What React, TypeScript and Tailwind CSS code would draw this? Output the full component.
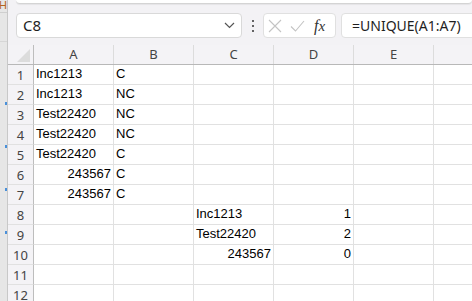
import React from 'react';

const cols = ['A', 'B', 'C', 'D', 'E', 'F'];
const widths = [80, 80, 80, 80, 80, 40];

type Cell = { v: string; right?: boolean };

// row data, keyed by column index
const rows: Record<number, Record<number, Cell>> = {
    1: { 0: { v: 'Inc1213' }, 1: { v: 'C' } },
    2: { 0: { v: 'Inc1213' }, 1: { v: 'NC' } },
    3: { 0: { v: 'Test22420' }, 1: { v: 'NC' } },
    4: { 0: { v: 'Test22420' }, 1: { v: 'NC' } },
    5: { 0: { v: 'Test22420' }, 1: { v: 'C' } },
    6: { 0: { v: '243567', right: true }, 1: { v: 'C' } },
    7: { 0: { v: '243567', right: true }, 1: { v: 'C' } },
    8: { 2: { v: 'Inc1213' }, 3: { v: '1', right: true } },
    9: { 2: { v: 'Test22420' }, 3: { v: '2', right: true } },
    10: { 2: { v: '243567', right: true }, 3: { v: '0', right: true } },
    11: {},
    12: {},
};

const cellFont = { fontFamily: '"Liberation Sans", Arial, sans-serif' };
const uiFont = { fontFamily: '"Noto Sans", "Open Sans", sans-serif' };

function FormulaBar() {
    return (
        <div className="h-[40px] flex items-start pt-[8px] pl-[8px] shrink-0">
            {/* name box */}
            <div className="w-[226px] h-[25px] bg-white border border-[#d9d9d9] rounded-[4px] flex items-center justify-between pl-[6px] pr-[6px] shrink-0">
                <span className="text-[15px] text-[#1f1f1f]" style={uiFont}>C8</span>
                <svg width="11" height="7" viewBox="0 0 11 7" fill="none">
                    <path d="M1 1l4.5 4.5L10 1" stroke="#555" strokeWidth="1.2" />
                </svg>
            </div>
            {/* kebab */}
            <div className="w-[21px] h-[25px] flex flex-col items-center justify-center gap-[3px] shrink-0">
                <span className="w-[2px] h-[2px] bg-[#333] rounded-full" />
                <span className="w-[2px] h-[2px] bg-[#333] rounded-full" />
                <span className="w-[2px] h-[2px] bg-[#333] rounded-full" />
            </div>
            {/* cancel / enter / fx */}
            <div className="w-[73px] h-[25px] bg-white border border-[#e0e0e0] rounded-[4px] flex items-center pl-[4px] gap-[8px] shrink-0">
                <svg width="14" height="14" viewBox="0 0 14 14" fill="none">
                    <path d="M1 1l12 12M13 1L1 13" stroke="#c4c4c4" strokeWidth="1.1" />
                </svg>
                <svg width="15" height="12" viewBox="0 0 15 12" fill="none">
                    <path d="M1 6.5l4.5 4.5L14 1" stroke="#c4c4c4" strokeWidth="1.1" />
                </svg>
                <span className="text-[16px] italic text-[#333] ml-[1px]" style={{ fontFamily: '"Liberation Serif", "DejaVu Serif", serif' }}>
                    f<span className="text-[15px]">x</span>
                </span>
            </div>
            {/* formula input */}
            <div className="ml-[5px] w-[160px] h-[25px] bg-white border border-[#e0e0e0] rounded-[4px] flex items-center pl-[10px] shrink-0">
                <span className="text-[14px] text-[#1f1f1f] whitespace-nowrap" style={uiFont}>=UNIQUE(A1:A7)</span>
            </div>
        </div>
    );
}

function Grid() {
    return (
        <div className="flex flex-col bg-white">
            {/* column header */}
            <div className="flex h-[20px] bg-[#f4f3f6] border-b border-[#b8b8b8]">
                <div className="w-[26px] shrink-0 border-r border-[#bdbdbd] relative">
                    <svg className="absolute right-[3px] bottom-[2px]" width="13" height="13" viewBox="0 0 13 13">
                        <path d="M13 0V13H0Z" fill="#dcdcdc" />
                    </svg>
                </div>
                {cols.map((c, i) => (
                    <div
                        key={c}
                        style={{ width: widths[i], ...uiFont }}
                        className="shrink-0 border-r border-[#dcdcdc] flex items-center justify-center text-[13px] text-[#444] pt-[1px]"
                    >
                        {c === 'F' ? '' : c}
                    </div>
                ))}
            </div>
            {Object.keys(rows).map((k) => {
                const r = Number(k);
                return (
                    <div key={r} className="flex h-[20px]">
                        <div
                            className="w-[26px] shrink-0 bg-[#f4f3f6] border-r border-[#bdbdbd] border-b border-b-[#e1e1e1] flex items-center justify-center text-[13px] text-[#444] pt-[2px]"
                            style={uiFont}
                        >
                            {r}
                        </div>
                        {cols.map((c, i) => {
                            const cell = rows[r][i];
                            return (
                                <div
                                    key={c}
                                    style={{ width: widths[i], ...cellFont }}
                                    className={`shrink-0 border-r border-b border-[#e1e1e1] flex items-end pb-[1px] px-[2px] text-[13px] text-black whitespace-nowrap ${
                                        cell?.right ? 'justify-end' : 'justify-start'
                                    }`}
                                >
                                    {cell?.v}
                                </div>
                            );
                        })}
                    </div>
                );
            })}
        </div>
    );
}

export default function App() {
    return (
        <div className="w-[472px] h-[301px] overflow-hidden flex bg-[#f3f2f5]">
            {/* sliver of the window behind */}
            <div className="w-[8px] shrink-0 bg-[#e6e6e6] border-r border-[#c8c8c8] flex flex-col overflow-hidden">
                <span className="text-[11px] leading-[10px] text-[#b5651d] -ml-[1px]" style={cellFont}>H</span>
                <div className="mt-[2px] border-t border-[#cfcfcf]" />
                <div className="mt-[28px] border-t border-[#d6d6d6]" />
                <div className="mt-[60px] ml-[5px] w-[2px] h-[3px] bg-[#4a90d9]" />
                <div className="mt-[40px] ml-[5px] w-[2px] h-[3px] bg-[#4a90d9]" />
                <div className="mt-[40px] ml-[5px] w-[2px] h-[3px] bg-[#4a90d9]" />
                <div className="mt-[40px] ml-[5px] w-[2px] h-[3px] bg-[#4a90d9]" />
            </div>
            <div className="flex-1 flex flex-col min-w-0">
                {/* bottom edge of the ribbon */}
                <div className="h-[5px] shrink-0 pl-[8px]">
                    <div className="h-[4px] bg-white rounded-b-[6px] border-b border-[#d4d4d4] shadow-[0_1px_1px_rgba(0,0,0,0.06)]" />
                </div>
                <FormulaBar />
                <Grid />
            </div>
        </div>
    );
}
